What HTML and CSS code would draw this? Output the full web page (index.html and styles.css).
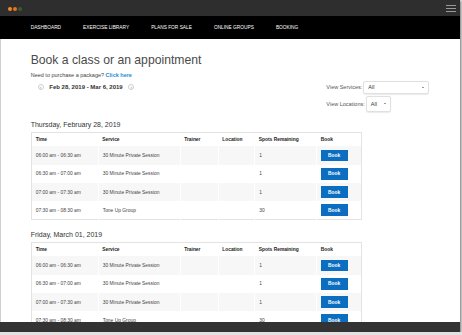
FILE: index.html
```html
<!DOCTYPE html>
<html lang="en">
<head>
    <meta charset="UTF-8">
    <meta name="viewport" content="width=device-width, initial-scale=1.0">
    <title>Booking</title>
    <link rel="stylesheet" href="styles.css">
</head>
<body>
    <div class="window">
        <div class="titlebar">
            <div class="dots">
                <span class="dot dot-orange"></span>
                <span class="dot dot-amber"></span>
                <span class="dot dot-green"></span>
            </div>
            <div class="menu-icon">
                <span></span>
                <span></span>
                <span></span>
            </div>
        </div>

        <nav class="nav">
            <a href="#">Dashboard</a>
            <a href="#">Exercise Library</a>
            <a href="#">Plans for Sale</a>
            <a href="#">Online Groups</a>
            <a href="#">Booking</a>
        </nav>

        <main class="content">
            <div class="intro">
                <div class="intro-left">
                    <h1>Book a class or an appointment</h1>
                    <p class="package">Need to purchase a package? <a href="#">Click here</a></p>
                    <div class="date-nav">
                        <span class="circle">&lsaquo;</span>
                        <strong>Feb 28, 2019 - Mar 6, 2019</strong>
                        <span class="circle">&rsaquo;</span>
                    </div>
                </div>

                <div class="filters">
                    <div class="filter">
                        <label>View Services:</label>
                        <div class="select select-wide">All<span class="caret"></span></div>
                    </div>
                    <div class="filter">
                        <label>View Locations:</label>
                        <div class="select select-narrow">All<span class="caret"></span></div>
                    </div>
                </div>
            </div>

            <!-- jueves -->
            <section class="day">
                <h2>Thursday, February 28, 2019</h2>
                <table>
                    <colgroup>
                        <col class="c-time"><col class="c-service"><col class="c-trainer">
                        <col class="c-location"><col class="c-spots"><col class="c-book">
                    </colgroup>
                    <thead>
                        <tr><th>Time</th><th>Service</th><th>Trainer</th><th>Location</th><th>Spots Remaining</th><th>Book</th></tr>
                    </thead>
                    <tbody>
                        <tr><td>06:00 am - 06:30 am</td><td>30 Minute Private Session</td><td></td><td></td><td>1</td><td class="book"><button class="btn">Book</button></td></tr>
                        <tr><td>06:30 am - 07:00 am</td><td>30 Minute Private Session</td><td></td><td></td><td>1</td><td class="book"><button class="btn">Book</button></td></tr>
                        <tr><td>07:00 am - 07:30 am</td><td>30 Minute Private Session</td><td></td><td></td><td>1</td><td class="book"><button class="btn">Book</button></td></tr>
                        <tr><td>07:30 am - 08:30 am</td><td>Tone Up Group</td><td></td><td></td><td>30</td><td class="book"><button class="btn">Book</button></td></tr>
                    </tbody>
                </table>
            </section>

            <!-- viernes -->
            <section class="day">
                <h2>Friday, March 01, 2019</h2>
                <table>
                    <colgroup>
                        <col class="c-time"><col class="c-service"><col class="c-trainer">
                        <col class="c-location"><col class="c-spots"><col class="c-book">
                    </colgroup>
                    <thead>
                        <tr><th>Time</th><th>Service</th><th>Trainer</th><th>Location</th><th>Spots Remaining</th><th>Book</th></tr>
                    </thead>
                    <tbody>
                        <tr><td>06:00 am - 06:30 am</td><td>30 Minute Private Session</td><td></td><td></td><td>1</td><td class="book"><button class="btn">Book</button></td></tr>
                        <tr><td>06:30 am - 07:00 am</td><td>30 Minute Private Session</td><td></td><td></td><td>1</td><td class="book"><button class="btn">Book</button></td></tr>
                        <tr><td>07:00 am - 07:30 am</td><td>30 Minute Private Session</td><td></td><td></td><td>1</td><td class="book"><button class="btn">Book</button></td></tr>
                        <tr><td>07:30 am - 08:30 am</td><td>Tone Up Group</td><td></td><td></td><td>30</td><td class="book"><button class="btn">Book</button></td></tr>
                    </tbody>
                </table>
            </section>
        </main>

        <div class="statusbar"></div>
    </div>
</body>
</html>
```

FILE: styles.css
```css
* {
    box-sizing: border-box;
}
body {
    margin: 0;
    background-color: #e2e2e2;
    font-family: "Liberation Sans", Arial, sans-serif;
}
.window {
    width: 460px;
    height: 332px;
    display: flex;
    flex-direction: column;
    overflow: hidden;
    box-shadow: 1px 1px 2px rgba(0,0,0,0.45);
}

/* barra de ventana */
.titlebar {
    height: 16px;
    flex-shrink: 0;
    background-color: #2e2e2e;
    display: flex;
    align-items: center;
    justify-content: space-between;
    padding: 1px 4px 0 8px;
}
.dots {
    display: flex;
    gap: 1px;
}
.dot {
    width: 4px;
    height: 4px;
    border-radius: 50%;
}
.dot-orange { background-color: #f58a1f; }
.dot-amber { background-color: #f06f1c; }
.dot-green { background-color: #3d5b2b; }

.menu-icon {
    width: 10px;
    display: flex;
    flex-direction: column;
    gap: 1.5px;
}
.menu-icon span {
    height: 1.6px;
    background-color: #9a9a9a;
}

.nav {
    height: 23px;
    flex-shrink: 0;
    background-color: #000;
    display: flex;
    align-items: center;
    gap: 22px;
    padding-left: 30.7px;
}
.nav a {
    color: #fff;
    font-size: 4.8px;
    text-transform: uppercase;
    text-decoration: none;
}

.content {
    flex: 1;
    min-height: 0;
    background-color: #fff;
    border-left: 1px solid #cfcfcf;
    padding: 14px 31px 0 29.7px;
    overflow: hidden;
}

.intro {
    display: flex;
    justify-content: space-between;
}
h1 {
    margin: 0;
    font-size: 12.2px;
    line-height: 15px;
    font-weight: normal;
    color: #4a4a4a;
}
.package {
    margin: 4px 0 0;
    font-size: 5.5px;
    line-height: 7px;
    color: #444;
}
.package a {
    color: #1b8bd6;
    font-weight: bold;
    text-decoration: none;
}
.date-nav {
    display: flex;
    align-items: center;
    gap: 5.6px;
    height: 7px;
    margin: 4.8px 0 0 7px;
}
.circle {
    width: 6px;
    height: 6px;
    border: 0.5px solid #cfcfcf;
    border-radius: 50%;
    display: flex;
    align-items: center;
    justify-content: center;
    font-size: 5px;
    line-height: 1;
    color: #999;
}
.date-nav strong {
    font-size: 6px;
    color: #333;
}

.filters {
    margin-top: 27.7px;
    display: flex;
    flex-direction: column;
    gap: 2px;
}
.filter {
    display: flex;
    align-items: center;
    gap: 1px;
}
.filter label {
    flex-shrink: 0;
    white-space: nowrap;
    font-size: 5.5px;
    color: #555;
}
.select {
    flex-shrink: 0;
    height: 13px;
    border: 1px solid #e0e0e0;
    border-radius: 2px;
    box-shadow: 0 0.5px 1px rgba(0,0,0,0.08);
    display: flex;
    align-items: center;
    justify-content: space-between;
    padding: 0 4px;
    font-size: 5.5px;
    color: #333;
}
.select-wide {
    width: 65.7px;
}
.select-narrow {
    width: 25px;
    height: 16.6px;
}
.caret {
    width: 0;
    height: 0;
    border-left: 1px solid transparent;
    border-right: 1px solid transparent;
    border-top: 1.4px solid #333;
}

/* tablas */
.day h2 {
    margin: 8.2px 0 2.5px;
    font-size: 7px;
    line-height: 9px;
    font-weight: normal;
    color: #333;
}
.day + .day h2 {
    margin-top: 10.2px;
}
table {
    width: 330px;
    border-collapse: collapse;
    table-layout: fixed;
    border: 1px solid #e3e3e3;
    font-size: 4.9px;
    color: #444;
}
.c-time { width: 67px; }
.c-service { width: 82px; }
.c-trainer { width: 38px; }
.c-location { width: 36.5px; }
.c-spots { width: 62px; }
.c-book { width: 44.5px; }

th {
    height: 14px;
    padding: 0 0 0 4px;
    text-align: left;
    font-weight: bold;
    color: #222;
}
td {
    height: 18.3px;
    padding: 0 0 0 4px;
    border-left: 1px solid #fff;
}
td:first-child {
    border-left: none;
}
tbody tr:nth-child(odd) td {
    background-color: #f7f7f7;
}
td.book {
    padding-left: 3.5px;
}
.btn {
    display: flex;
    align-items: center;
    justify-content: center;
    width: 27px;
    height: 11.7px;
    padding: 0;
    border: none;
    background-color: #0b6ec1;
    color: #fff;
    font-family: "Liberation Sans", Arial, sans-serif;
    font-size: 4.9px;
    font-weight: bold;
}

.statusbar {
    height: 10px;
    flex-shrink: 0;
    background-color: #333;
}
```
